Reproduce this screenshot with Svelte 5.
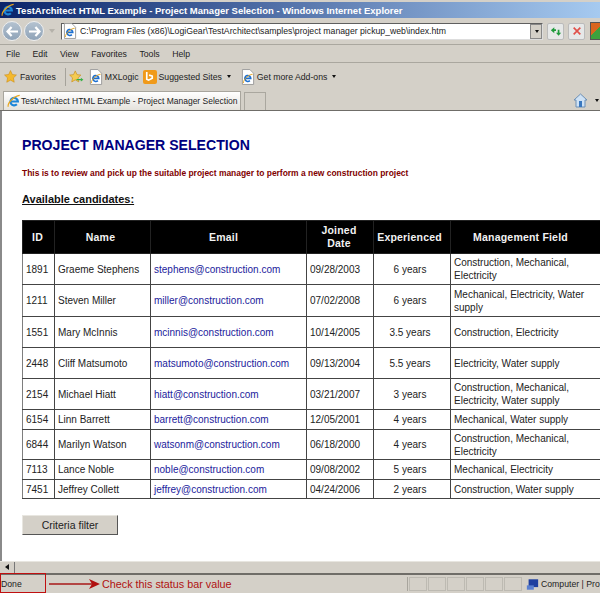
<script>
	const candidates = [
		{ id: 1891, name: 'Graeme Stephens', email: 'stephens@construction.com', joined: '09/28/2003', exp: '6 years', field: 'Construction, Mechanical, Electricity', h: 31 },
		{ id: 1211, name: 'Steven Miller', email: 'miller@construction.com', joined: '07/02/2008', exp: '6 years', field: 'Mechanical, Electricity, Water supply', h: 32 },
		{ id: 1551, name: 'Mary McInnis', email: 'mcinnis@construction.com', joined: '10/14/2005', exp: '3.5 years', field: 'Construction, Electricity', h: 31 },
		{ id: 2448, name: 'Cliff Matsumoto', email: 'matsumoto@construction.com', joined: '09/13/2004', exp: '5.5 years', field: 'Electricity, Water supply', h: 31 },
		{ id: 2154, name: 'Michael Hiatt', email: 'hiatt@construction.com', joined: '03/21/2007', exp: '3 years', field: 'Construction, Mechanical, Electricity, Water supply', h: 31 },
		{ id: 6154, name: 'Linn Barrett', email: 'barrett@construction.com', joined: '12/05/2001', exp: '4 years', field: 'Mechanical, Water supply', h: 20 },
		{ id: 6844, name: 'Marilyn Watson', email: 'watsonm@construction.com', joined: '06/18/2000', exp: '4 years', field: 'Construction, Mechanical, Electricity', h: 30 },
		{ id: 7113, name: 'Lance Noble', email: 'noble@construction.com', joined: '09/08/2002', exp: '5 years', field: 'Mechanical, Electricity', h: 20 },
		{ id: 7451, name: 'Jeffrey Collett', email: 'jeffrey@construction.com', joined: '04/24/2006', exp: '2 years', field: 'Construction, Water supply', h: 19 }
	];
	const menu = ['File', 'Edit', 'View', 'Favorites', 'Tools', 'Help'];
</script>

{#snippet ie(size)}
	<svg width={size} height={size} viewBox="0 0 16 16" class="ie">
		<path d="M4.500 8.500h8a4.300 4.300 0 1 0-1.200 3.200" fill="none" stroke="#1c86d8" stroke-width="2.400" />
		<path d="M1.500 14.500C0 11 8 2 14.500 1.500" fill="none" stroke="#e8a51c" stroke-width="1.300" />
	</svg>
{/snippet}

{#snippet page()}
	<span class="page-icon">
		<svg width="14" height="16" viewBox="0 0 15 17">
			<path d="M1.5.5h8l4 4v12h-12z" fill="#fff" stroke="#9a9a9a" />
			<path d="M4.500 10h6a3.200 3.200 0 1 0-1 2.400" fill="none" stroke="#1c6fd0" stroke-width="1.700" />
			<path d="M2.500 15C2.500 11 8 6 12.500 5.500" fill="none" stroke="#e8a51c" />
		</svg>
	</span>
{/snippet}

<div class="window">
	<div class="titlebar">
		{@render ie(14)}
		<span>TestArchitect HTML Example - Project Manager Selection - Windows Internet Explorer</span>
	</div>

	<div class="navrow">
		<div class="navbuttons">
			<span class="round">
				<svg width="13" height="11" viewBox="0 0 14 12"><path d="M6 1 1.5 6 6 11M2 6h11" fill="none" stroke="#fff" stroke-width="2.400" /></svg>
			</span>
			<span class="round">
				<svg width="13" height="11" viewBox="0 0 14 12"><path d="M8 1l4.500 5L8 11M12 6H1" fill="none" stroke="#fff" stroke-width="2.400" /></svg>
			</span>
			<span class="history"></span>
		</div>
		<div class="address">
			{@render page()}
			<span class="url">C:\Program Files (x86)\LogiGear\TestArchitect\samples\project manager pickup_web\index.htm</span>
			<span class="dropdown"><i class="caret"></i></span>
		</div>
		<span class="toolbtn">
			<svg width="12" height="11" viewBox="0 0 14 12"><path d="M5 1 1 4.500l4 3.500V5.500h2v-2H5zM10 11l3-3.500h-2V4H9v3.500H7z" fill="#1f9a3c" /></svg>
		</span>
		<span class="toolbtn">
			<svg width="10" height="10" viewBox="0 0 12 12"><path d="m2 2 8 8M10 2l-8 8" stroke="#e0504a" stroke-width="2" /></svg>
		</span>
		<span class="search-icon"></span>
	</div>

	<div class="menubar">
		{#each menu as item}<span>{item}</span>{/each}
	</div>

	<div class="favbar">
		<span class="fav main">
			<svg width="13" height="13" viewBox="0 0 24 24"><path d="m12 1 3.400 7.300 7.600.9-5.600 5.400 1.500 8L12 18.700 5.100 22.600l1.500-8L1 9.200l7.600-.9z" fill="#f4b92e" stroke="#c98a14" /></svg>
			Favorites
		</span>
		<span class="grip"></span>
		<svg class="addfav" width="15" height="13" viewBox="0 0 24 20"><path d="m10 1 2.800 6 6.200.7-4.600 4.400 1.200 6.500L10 15.400 4.400 18.600l1.200-6.500L1 7.700 7.200 7z" fill="#f4cb52" stroke="#c98a14" /><path d="M12 14h7v-2l4 3-4 3v-2h-7z" fill="#35b044" /></svg>
		<span class="fav">{@render page()}MXLogic</span>
		<span class="fav">
			<span class="bing"><svg width="11" height="11" viewBox="0 0 12 12"><path d="M3 1v8l2 1 4-2V5.500L5.500 4.500" fill="none" stroke="#fff" stroke-width="1.800" /></svg></span>
			Suggested Sites <i class="caret"></i>
		</span>
		<span class="fav sites">{@render page()}Get more Add-ons <i class="caret"></i></span>
	</div>

	<div class="tabbar">
		<div class="tab">
			{@render ie(14)}
			<span>TestArchitect HTML Example - Project Manager Selection</span>
		</div>
		<div class="newtab"></div>
		<div class="tools">
			<svg width="15" height="15" viewBox="0 0 15 15"><path d="M7.500 1 1 7h2v7h9V7h2z" fill="#cfe2f5" stroke="#6c8fb5" /><rect x="6" y="8" width="3" height="6" fill="#3a78bf" /></svg>
			<i class="caret"></i>
		</div>
	</div>

	<main class="content">
		<h1>PROJECT MANAGER SELECTION</h1>
		<p class="intro">This is to review and pick up the suitable project manager to perform a new construction project</p>
		<h2>Available candidates:</h2>

		<table>
			<colgroup>
				<col style="width: 32px" />
				<col style="width: 96px" />
				<col style="width: 156px" />
				<col style="width: 67px" />
				<col style="width: 77px" />
				<col style="width: 170px" />
			</colgroup>
			<thead>
				<tr>
					<th>ID</th>
					<th>Name</th>
					<th>Email</th>
					<th>Joined<br />Date</th>
					<th>Experienced</th>
					<th>Management Field</th>
				</tr>
			</thead>
			<tbody>
				{#each candidates as c}
					<tr style="height: {c.h}px">
						<td>{c.id}</td>
						<td>{c.name}</td>
						<td class="email">{c.email}</td>
						<td>{c.joined}</td>
						<td class="center">{c.exp}</td>
						<td class="field">{c.field}</td>
					</tr>
				{/each}
			</tbody>
		</table>

		<button type="button">Criteria filter</button>
	</main>

	<div class="hscroll">
		<span class="arrow"></span>
		<span class="track"></span>
	</div>

	<div class="statusbar">
		<span class="done">Done</span>
		<span class="spacer"></span>
		{#each Array(6) as _}<span class="pane"></span>{/each}
		<span class="zone">
			<svg width="13" height="13" viewBox="0 0 15 14"><rect x="3" y="1" width="11" height="9" fill="#1f3f9f" /><rect x="1" y="8" width="8" height="5" fill="#5a7fd0" /></svg>
			Computer | Pro
		</span>
	</div>

	<!-- red annotation over the status bar -->
	<div class="callout"></div>
	<svg class="callout-arrow" width="52" height="10" viewBox="0 0 52 10"><path d="M0 5h44" stroke="#a81818" stroke-width="1.500" /><path d="M40 0l11 5-11 5 3-5z" fill="#b01010" /></svg>
	<span class="callout-text">Check this status bar value</span>
</div>

<style>
	:global(body) {
		margin: 0;
	}

	.window {
		position: relative;
		display: flex;
		flex-direction: column;
		width: 600px;
		height: 593px;
		overflow: hidden;
		background: #d4d0c8;
		font-family: "Liberation Sans", Arial, sans-serif;
		font-size: 8.700px;
		color: #222;
	}

	.ie {
		flex: none;
	}

	.titlebar {
		display: flex;
		align-items: center;
		gap: 1px;
		height: 16px;
		flex: none;
		margin-top: 2px;
		padding: 0 1px;
		background: linear-gradient(90deg, #0a246a, #a6caf0);
		color: #fff;
		font-weight: bold;
		font-size: 9.500px;
		white-space: nowrap;
	}

	.navrow {
		display: flex;
		align-items: center;
		height: 26px;
		flex: none;
		border-bottom: 1px solid #aaa79f;
	}

	.navbuttons {
		display: flex;
		align-items: center;
		width: 61px;
		flex: none;
		padding-left: 2px;
		box-sizing: border-box;
		gap: 2px;
	}

	.round {
		display: flex;
		align-items: center;
		justify-content: center;
		width: 20px;
		height: 20px;
		flex: none;
		box-sizing: border-box;
		border-radius: 50%;
		background: linear-gradient(#b4c2d0, #8fa3b8);
		border: 1px solid #eee;
	}

	.history {
		width: 0;
		height: 0;
		margin-left: 3px;
		border: 3px solid transparent;
		border-top: 4px solid #b5b2aa;
		border-bottom: 0;
	}

	.address {
		display: flex;
		align-items: center;
		width: 482px;
		flex: none;
		height: 17px;
		background: #fff;
		border: 1px solid #5f5f5f;
		border-right-color: #ddd;
		border-bottom-color: #ddd;
		box-sizing: border-box;
	}

	.page-icon {
		display: inline-flex;
		flex: none;
		width: 14px;
		margin: 0 3px 0 1px;
	}

	.url {
		flex: 1;
		white-space: nowrap;
		overflow: hidden;
	}

	.dropdown {
		display: flex;
		align-items: center;
		justify-content: center;
		width: 12px;
		height: 15px;
		background: #d4d0c8;
		border: 1px solid #888;
		box-sizing: border-box;
	}

	.caret {
		display: inline-block;
		width: 0;
		height: 0;
		margin-left: 2px;
		vertical-align: 2px;
		border: 2.500px solid transparent;
		border-top: 3px solid #111;
		border-bottom: 0;
	}

	.toolbtn {
		display: flex;
		align-items: center;
		justify-content: center;
		width: 17px;
		height: 17px;
		margin-left: 4px;
		flex: none;
		box-sizing: border-box;
		background: #e6e8e8;
		border: 1px solid #bbb;
		border-radius: 2px;
	}

	.search-icon {
		flex: none;
		width: 20px;
		height: 16px;
		margin-left: 5px;
		background: linear-gradient(135deg, #d9661f 0 35%, #3da13d 35% 70%, #e8b21c 70%);
		border: 1px solid #555;
	}

	.menubar {
		display: flex;
		align-items: center;
		height: 17px;
		flex: none;
		gap: 12.500px;
		padding-left: 6px;
		border-bottom: 1px solid #aaa79f;
	}

	.favbar {
		display: flex;
		align-items: center;
		height: 27px;
		flex: none;
		padding-left: 4px;
	}

	.fav {
		display: flex;
		align-items: center;
		white-space: nowrap;
		margin-right: 4px;
	}

	.fav .page-icon {
		margin-right: 2px;
	}

	.fav .caret {
		margin-left: 5px;
		vertical-align: 0;
	}

	.fav.main svg {
		margin-right: 3px;
	}

	.fav.sites {
		margin-left: 5px;
	}

	.grip {
		width: 1px;
		height: 18px;
		margin: 0 3px 0 5px;
		background: #a5a29a;
	}

	.addfav {
		margin-right: 4px;
	}

	.bing {
		display: flex;
		align-items: center;
		justify-content: center;
		width: 14px;
		height: 14px;
		margin-right: 2px;
		background: #f09a1a;
		border-radius: 2px;
	}

	.tabbar {
		display: flex;
		align-items: flex-end;
		height: 20px;
		flex: none;
		padding-left: 3px;
		border-bottom: 1px solid #6f6d68;
		font-size: 8.500px;
	}

	.tab {
		display: flex;
		align-items: center;
		width: 238px;
		height: 19px;
		padding-left: 3px;
		box-sizing: border-box;
		background: linear-gradient(#fff, #e4e2dc);
		border: 1px solid #a8a59d;
		border-bottom: 0;
		white-space: nowrap;
	}

	.newtab {
		width: 22px;
		height: 18px;
		margin-left: 3px;
		box-sizing: border-box;
		border: 1px solid #aaa79f;
		border-bottom: 0;
	}

	.tools {
		display: flex;
		align-items: center;
		align-self: center;
		gap: 5px;
		margin-left: auto;
		margin-right: 1px;
	}

	.content {
		flex: 1;
		min-height: 0;
		padding-left: 20px;
		background: #fff;
		border-left: 2px solid #8a8a8a;
		overflow: hidden;
	}

	h1 {
		margin: 26px 0 0;
		color: #00007f;
		font-size: 14.100px;
		line-height: 16px;
		font-weight: bold;
		white-space: nowrap;
	}

	.intro {
		margin: 15px 0 0;
		color: #800000;
		font-size: 8.450px;
		line-height: 10px;
		font-weight: bold;
		white-space: nowrap;
	}

	h2 {
		margin: 14px 0 0;
		color: #111;
		font-size: 11px;
		line-height: 14px;
		font-weight: bold;
		text-decoration: underline;
	}

	table {
		width: 598px;
		margin-top: 14px;
		table-layout: fixed;
		border-collapse: collapse;
		font-size: 10px;
		color: #222;
	}

	th {
		height: 32px;
		padding: 0;
		background: #000;
		color: #f2f2f2;
		font-size: 10.500px;
		line-height: 13px;
		font-weight: bold;
		text-align: center;
		border: 1px solid #222;
		letter-spacing: .2px;
	}

	th:nth-child(1),
	th:nth-child(4) {
		padding-right: 2px;
	}

	th:nth-child(2) {
		padding-right: 4px;
	}

	th:nth-child(3) {
		padding-right: 10px;
	}

	th:nth-child(5) {
		padding-right: 5px;
	}

	th:nth-child(6) {
		padding-right: 30px;
	}

	td {
		padding: 0 3px;
		border: 1px solid #444;
		border-left-color: #7e7e7e;
		line-height: 13px;
	}

	.email {
		color: #1b1b9c;
	}

	.center {
		text-align: center;
		padding-right: 7px;
	}

	.field {
		padding-right: 20px;
	}

	button {
		display: block;
		width: 96px;
		height: 20px;
		margin-top: 16px;
		padding: 0;
		background: #d4d0c8;
		border: 1px solid;
		border-color: #e8e6e0 #555 #555 #e8e6e0;
		font-family: "Liberation Sans", Arial, sans-serif;
		font-size: 10.500px;
		color: #222;
	}

	.hscroll {
		display: flex;
		flex: none;
		height: 11px;
		border-top: 1px solid #e8e6e0;
		border-bottom: 2px solid #6f6d68;
	}

	.arrow {
		position: relative;
		width: 12px;
		margin-left: 2px;
		border-right: 1px solid #777;
	}

	.arrow::before {
		content: '';
		position: absolute;
		left: 3px;
		top: 2px;
		border: 3px solid transparent;
		border-right: 4px solid #111;
		border-left: 0;
	}

	.track {
		flex: 1;
	}

	.statusbar {
		display: flex;
		align-items: center;
		flex: none;
		height: 18px;
	}

	.done {
		width: 46px;
		flex: none;
		padding-left: 1px;
		box-sizing: border-box;
	}

	.spacer {
		width: 362px;
		height: 14px;
		flex: none;
		box-sizing: border-box;
		border-right: 1px solid #a8a59d;
	}

	.pane {
		width: 18px;
		height: 14px;
		flex: none;
		margin-left: 1px;
		box-sizing: border-box;
		border: 1px solid #bdbab2;
	}

	.zone {
		display: flex;
		align-items: center;
		flex: none;
		gap: 2px;
		margin-left: 4px;
		white-space: nowrap;
	}

	.callout {
		position: absolute;
		left: 0;
		top: 573px;
		width: 46px;
		height: 20px;
		box-sizing: border-box;
		border: 1px solid #c01010;
	}

	.callout-arrow {
		position: absolute;
		left: 49px;
		top: 579px;
	}

	.callout-text {
		position: absolute;
		left: 102px;
		top: 577px;
		color: #b01010;
		font-size: 10.800px;
		line-height: 14px;
		white-space: nowrap;
	}
</style>
